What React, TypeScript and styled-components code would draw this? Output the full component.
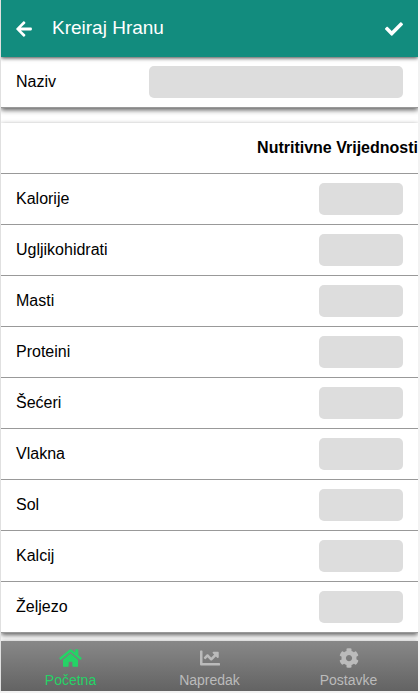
import React from 'react';
import styled, { createGlobalStyle } from 'styled-components';
import { FaArrowLeft, FaCheck, FaHome, FaChartLine, FaCog } from 'react-icons/fa';

const GlobalStyle = createGlobalStyle`
  * { box-sizing: border-box; }
  body {
    margin: 0;
    background: #f2f2f2;
    font-family: "Liberation Sans", Arial, sans-serif;
    font-size: 16px;
    color: #000;
  }
`;

const Frame = styled.div`
  width: 418px;
  height: 691px;
  border-left: 1px solid #e0e0e0;
  overflow: hidden;
  display: flex;
  flex-direction: column;
  background: #fff;
`;

const Header = styled.header`
  height: 57px;
  flex: none;
  display: flex;
  align-items: center;
  padding: 1px 15px 0 14px;
  background: #128c7e;
  color: #fff;
  box-shadow: 0 1px 4px rgba(0, 0, 0, 0.75);
  z-index: 1;
`;

const Title = styled.h1`
  flex: 1;
  margin: -2px 0 0 19px;
  font-size: 19px;
  font-weight: 400;
  line-height: 22px;
`;

const Card = styled.section`
  flex: none;
  background: #fff;
  box-shadow: 0 2px 5px rgba(0, 0, 0, 0.65);

  & + & {
    margin-top: 15px;
  }
`;

const Row = styled.label`
  height: 51px;
  display: flex;
  align-items: center;
  justify-content: space-between;
  padding: 0 15px;
  border-bottom: 1px solid #999;
`;

const CardHeading = styled.h2`
  height: 51px;
  margin: 0;
  display: flex;
  align-items: center;
  justify-content: flex-end;
  border-bottom: 1px solid #999;
  font-size: 16px;
  font-weight: 700;
`;

const Field = styled.input<{ $wide?: boolean }>`
  width: ${(p) => (p.$wide ? 254 : 84)}px;
  height: 32px;
  padding: 0 8px;
  border: 0;
  border-radius: 5px;
  background: #ddd;
  font: inherit;
`;

const TabBar = styled.nav`
  height: 50px;
  flex: none;
  margin-top: auto;
  display: grid;
  grid-template-columns: repeat(3, 1fr);
  background: linear-gradient(#888, #636363);
  box-shadow: 0 0 4px rgba(0, 0, 0, 0.3);
`;

const Tab = styled.a<{ $active?: boolean }>`
  display: flex;
  flex-direction: column;
  align-items: center;
  padding-top: 7px;
  font-size: 14px;
  line-height: 16px;
  gap: 4px;
  color: ${(p) => (p.$active ? '#25d366' : '#bbb')};
`;

const HomeIcon = styled(FaHome)`
  width: 23px;
  height: 20px;
`;

const nutrients = ['Kalorije', 'Ugljikohidrati', 'Masti', 'Proteini', 'Šećeri', 'Vlakna', 'Sol', 'Kalcij', 'Željezo'];

export default function App() {
  return (
    <>
      <GlobalStyle />
      <Frame>
        <Header>
          <FaArrowLeft size={18} />
          <Title>Kreiraj Hranu</Title>
          <FaCheck size={18} />
        </Header>
        <Card>
          <Row>
            Naziv
            <Field $wide />
          </Row>
        </Card>
        <Card>
          <CardHeading>Nutritivne Vrijednosti</CardHeading>
          {nutrients.map((name) => (
            <Row key={name}>
              {name}
              <Field />
            </Row>
          ))}
        </Card>
        <TabBar>
          <Tab $active>
            <HomeIcon />
            Početna
          </Tab>
          <Tab>
            <FaChartLine size={20} />
            Napredak
          </Tab>
          <Tab>
            <FaCog size={20} />
            Postavke
          </Tab>
        </TabBar>
      </Frame>
    </>
  );
}
